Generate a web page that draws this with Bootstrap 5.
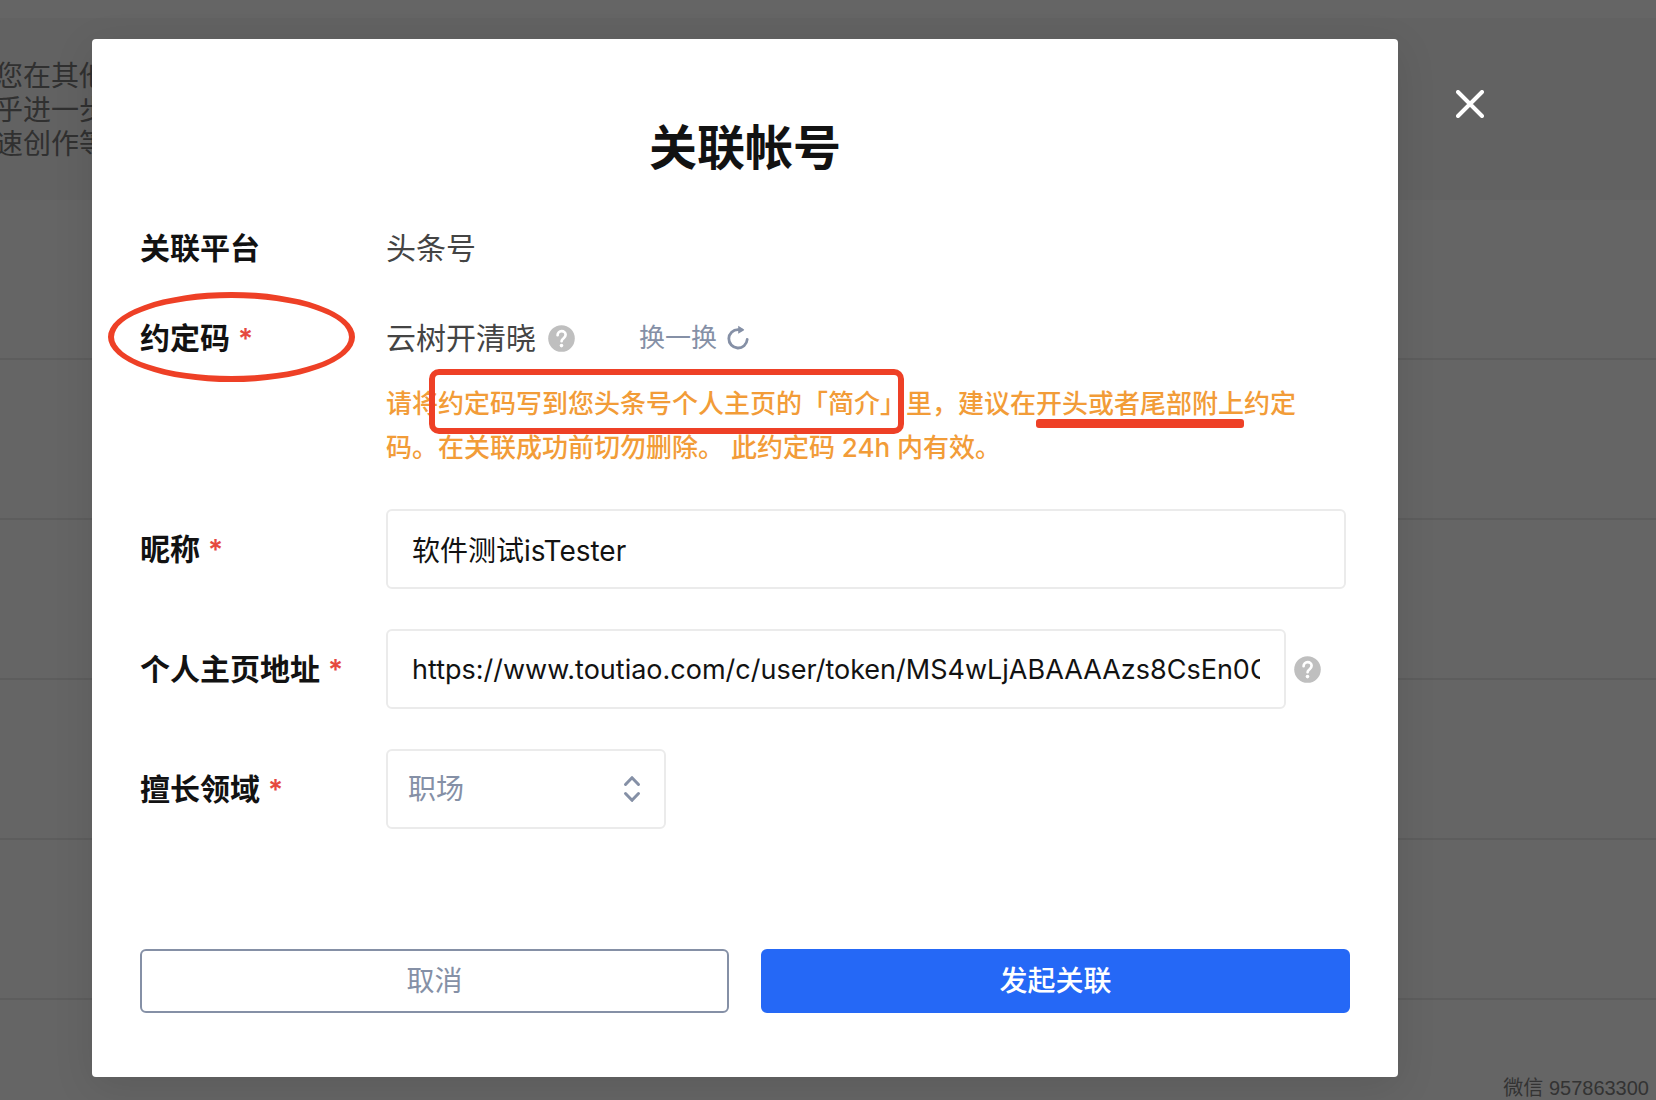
<!DOCTYPE html>
<html lang="zh-CN">
<head>
<meta charset="utf-8">
<meta name="viewport" content="width=device-width, initial-scale=1">
<title>关联帐号</title>
<link href="https://cdn.jsdelivr.net/npm/bootstrap@5.3.0/dist/css/bootstrap.min.css" rel="stylesheet">
<style>
  :root { --ink: #121212; --muted: #8590a6; --pen: #ee4026; }
  body { font-family: Inter, "Noto Sans CJK SC", sans-serif; color: var(--ink); min-height: 100vh; overflow: hidden; }

  /* dimmed page */
  .backpage { inset: 0; z-index: 0; padding-top: 18px; background: #fff; }
  .notice { height: 182px; padding-top: 41px; background: #f6f6f6; color: #7a7a7a; font-size: 28px; line-height: 34px; }
  .notice p { margin: 0 0 0 -5px; }
  .entry { height: 160px; border-bottom: 2px solid #ebebeb; }
  .shade { inset: 0; background: rgba(0, 0, 0, .605); }

  /* dialog */
  .sheet { margin: 39px 258px 23px 92px; padding: 77px 48px 64px; border-radius: 4px; box-shadow: 0 10px 40px rgba(0, 0, 0, .1); z-index: 1; }
  .sheet h1 { font-size: 48px; line-height: 64px; font-weight: 600; }
  .field { display: flex; font-size: 30px; line-height: 44px; }
  .field-name { flex: 0 0 246px; font-weight: 600; white-space: nowrap; }
  .field-name i { margin-left: 8px; color: #e5493f; font-size: 28px; line-height: 1; font-style: normal; }
  .field-body { flex: 1 1 0; min-width: 0; color: #444; }
  .plain { margin-top: 46px; }
  .boxes { display: grid; gap: 40px; margin-top: 39px; padding-right: 4px; }
  .boxes .field { align-items: center; }
  .boxes .form-control, .boxes .form-select {
    height: 80px; padding: 0 24px; border: 2px solid #ebebeb; border-radius: 6px;
    font-size: 28px; line-height: 44px; color: var(--ink); text-overflow: clip; }
  .boxes .form-select { width: 280px; padding: 0 20px; color: var(--muted); background-image: none; }
  .boxes .form-control[type="url"] { font-size: 27px; }
  .arrows { right: 24px; top: 26px; pointer-events: none; }
  .boxes .with-help { padding-right: 21px; }
  .help { width: 27px; height: 27px; }
  .code-word { margin-right: 12px; }
  .swap { margin-left: 64px; font-size: 26px; line-height: 44px; color: var(--muted); }
  .hint { margin-top: 22px; padding-right: 30px; font-size: 26px; line-height: 44px; font-weight: 500; color: #f29c38; }
  .actions { gap: 32px; margin-top: 120px; }
  .actions .btn { flex: 1 1 0; height: 64px; padding: 0; border: 2px solid var(--muted); border-radius: 6px; font-size: 28px; line-height: 44px; color: var(--muted); }
  .actions .btn-go { background: #2568f6; border-color: #2568f6; color: #fff; font-weight: 500; }
  .shut { left: calc(100% + 50px); top: 43px; width: 44px; height: 44px; }

  /* pen marks drawn over the form */
  .pen { position: absolute; pointer-events: none; }
  .pen-oval { left: -32px; top: -24px; width: 247px; height: 90px; border: 6px solid var(--pen); border-radius: 50%; }
  .pen-box { left: 43px; top: -13px; width: 475px; height: 65px; border: 6px solid var(--pen); border-radius: 10px; }
  .pen-line { left: 0; right: 0; bottom: -9px; height: 9px; background: var(--pen); border-radius: 3px; }
  .stamp { right: 7px; bottom: 0; font: 20px/24px "Liberation Sans", "Noto Sans CJK SC", sans-serif; color: #333; }
</style>
<script src="https://cdn.jsdelivr.net/npm/bootstrap@5.3.0/dist/js/bootstrap.bundle.min.js"></script>
</head>
<body class="position-relative d-flex flex-column">

<div class="backpage position-absolute overflow-hidden" aria-hidden="true">
  <div class="notice text-nowrap">
    <p>您在其他</p>
    <p>乎进一步</p>
    <p>速创作等</p>
  </div>
  <div class="entry"></div>
  <div class="entry"></div>
  <div class="entry"></div>
  <div class="entry"></div>
  <div class="entry"></div>
  <div class="shade position-absolute"></div>
</div>

<main class="sheet bg-white position-relative" role="dialog" aria-labelledby="dlg-title">
  <h1 id="dlg-title" class="text-center m-0">关联帐号</h1>

  <form>
    <div class="field plain">
      <div class="field-name">关联平台</div>
      <div class="field-body">头条号</div>
    </div>

    <div class="field plain">
      <div class="field-name position-relative">约定码<i>*</i><span class="pen pen-oval"></span></div>
      <div class="field-body">
        <div class="d-flex align-items-center">
          <span class="code-word">云树开清晓</span>
          <svg class="help flex-shrink-0" viewBox="0 0 27 27" role="img" aria-label="帮助"><circle cx="13.5" cy="13.5" r="13.3" fill="#bfbfbf"/><path d="M9.6 10.2c0-2.3 1.7-4 4-4s4 1.5 4 3.6c0 1.6-.8 2.4-2 3.4-1.3 1-2 1.600-2 3" fill="none" stroke="#fff" stroke-width="2.7" stroke-linecap="round"/><circle cx="13.500" cy="20.600" r="1.800" fill="#fff"/></svg>
          <button type="button" class="swap btn p-0 border-0 d-flex align-items-center gap-2">换一换
            <svg width="26" height="26" viewBox="0 0 26 26" fill="none" aria-hidden="true"><path d="M16.200 4.600H13A9.200 9.200 0 1 0 22.200 14.500" stroke="#8590a6" stroke-width="2.800" stroke-linecap="round"/><path d="M13.200.8 18.700 4.300a.7.7 0 0 1 0 1.200L13.200 8.800z" fill="#8590a6"/></svg>
          </button>
        </div>
        <p class="hint mb-0 position-relative">请将约定码写到您头条号个人主页的「简介」里，建议在<span class="position-relative">开头或者尾部附上<span class="pen pen-line"></span></span>约定码。在关联成功前切勿删除。 此约定码 24h 内有效。<span class="pen pen-box"></span></p>
      </div>
    </div>

    <div class="boxes">
      <div class="field">
        <label class="field-name" for="nick">昵称<i>*</i></label>
        <div class="field-body"><input id="nick" class="form-control" type="text" value="软件测试isTester"></div>
      </div>
      <div class="field">
        <label class="field-name" for="home">个人主页地址<i>*</i></label>
        <div class="field-body with-help d-flex align-items-center gap-2">
          <input id="home" class="form-control" type="url" value="https://www.toutiao.com/c/user/token/MS4wLjABAAAAzs8CsEn0C0">
          <svg class="help flex-shrink-0 me-1" viewBox="0 0 27 27" role="img" aria-label="帮助"><circle cx="13.5" cy="13.5" r="13.3" fill="#bfbfbf"/><path d="M9.6 10.2c0-2.3 1.7-4 4-4s4 1.5 4 3.6c0 1.6-.8 2.4-2 3.4-1.3 1-2 1.600-2 3" fill="none" stroke="#fff" stroke-width="2.7" stroke-linecap="round"/><circle cx="13.500" cy="20.600" r="1.800" fill="#fff"/></svg>
        </div>
      </div>
      <div class="field">
        <label class="field-name" for="area">擅长领域<i>*</i></label>
        <div class="field-body d-flex">
          <div class="position-relative">
            <select id="area" class="form-select"><option>职场</option></select>
            <svg class="arrows position-absolute" width="20" height="28" viewBox="0 0 20 28" fill="none" stroke="#8590a6" stroke-width="3" stroke-linecap="round" stroke-linejoin="round" aria-hidden="true"><path d="M3.500 9.500 10 2.700l6.500 6.800M3.500 18.500l6.500 6.800 6.500-6.800"/></svg>
          </div>
        </div>
      </div>
    </div>

    <div class="actions d-flex">
      <button type="button" class="btn">取消</button>
      <button type="submit" class="btn btn-go">发起关联</button>
    </div>
  </form>

  <button type="button" class="shut btn p-0 border-0 position-absolute d-flex align-items-center justify-content-center" aria-label="关闭">
    <svg width="28" height="28" viewBox="0 0 28 28" stroke="#fff" stroke-width="4" stroke-linecap="round" aria-hidden="true"><path d="M2 2l24 24M26 2 2 26"/></svg>
  </button>
</main>

<div class="stamp position-absolute">微信 957863300</div>
</body>
</html>
